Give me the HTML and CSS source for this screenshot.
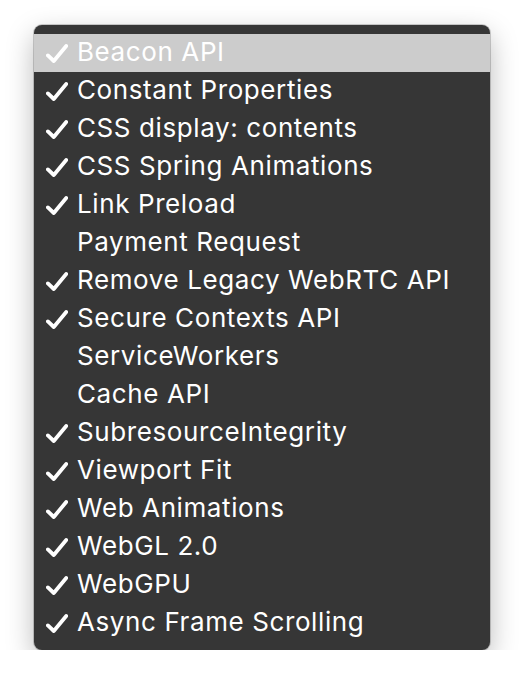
FILE: index.html
```html
<!DOCTYPE html>
<html>
<head>
<meta charset="utf-8">
<link rel="stylesheet" href="styles.css">
</head>
<body>
<div class="menu">
  <div class="item active"><svg class="check" viewBox="0 0 22 19"><path d="M1.9 11.4 L7.8 17 L20.2 2"/></svg><span class="label">Beacon API</span></div>
  <div class="item"><svg class="check" viewBox="0 0 22 19"><path d="M1.9 11.4 L7.8 17 L20.2 2"/></svg><span class="label">Constant Properties</span></div>
  <div class="item"><svg class="check" viewBox="0 0 22 19"><path d="M1.9 11.4 L7.8 17 L20.2 2"/></svg><span class="label">CSS display: contents</span></div>
  <div class="item"><svg class="check" viewBox="0 0 22 19"><path d="M1.9 11.4 L7.8 17 L20.2 2"/></svg><span class="label">CSS Spring Animations</span></div>
  <div class="item"><svg class="check" viewBox="0 0 22 19"><path d="M1.9 11.4 L7.8 17 L20.2 2"/></svg><span class="label">Link Preload</span></div>
  <div class="item"><span class="nocheck"></span><span class="label">Payment Request</span></div>
  <div class="item"><svg class="check" viewBox="0 0 22 19"><path d="M1.9 11.4 L7.8 17 L20.2 2"/></svg><span class="label">Remove Legacy WebRTC API</span></div>
  <div class="item"><svg class="check" viewBox="0 0 22 19"><path d="M1.9 11.4 L7.8 17 L20.2 2"/></svg><span class="label">Secure Contexts API</span></div>
  <div class="item"><span class="nocheck"></span><span class="label">ServiceWorkers</span></div>
  <div class="item"><span class="nocheck"></span><span class="label">Cache API</span></div>
  <div class="item"><svg class="check" viewBox="0 0 22 19"><path d="M1.9 11.4 L7.8 17 L20.2 2"/></svg><span class="label">SubresourceIntegrity</span></div>
  <div class="item"><svg class="check" viewBox="0 0 22 19"><path d="M1.9 11.4 L7.8 17 L20.2 2"/></svg><span class="label">Viewport Fit</span></div>
  <div class="item"><svg class="check" viewBox="0 0 22 19"><path d="M1.9 11.4 L7.8 17 L20.2 2"/></svg><span class="label">Web Animations</span></div>
  <div class="item"><svg class="check" viewBox="0 0 22 19"><path d="M1.9 11.4 L7.8 17 L20.2 2"/></svg><span class="label">WebGL 2.0</span></div>
  <div class="item"><svg class="check" viewBox="0 0 22 19"><path d="M1.9 11.4 L7.8 17 L20.2 2"/></svg><span class="label">WebGPU</span></div>
  <div class="item"><svg class="check" viewBox="0 0 22 19"><path d="M1.9 11.4 L7.8 17 L20.2 2"/></svg><span class="label">Async Frame Scrolling</span></div>
</div>
</body>
</html>
```

FILE: styles.css
```css
html, body {
  margin: 0;
  padding: 0;
  background: #ffffff;
}
body {
  padding: 25px 0 0 34px;
}
.menu {
  width: 456px;
  box-sizing: border-box;
  padding: 9px 0 8px;
  background: #363636;
  border-radius: 8px;
  box-shadow: 0 0 0 1px rgba(0, 0, 0, 0.18), 0 10px 28px rgba(0, 0, 0, 0.28);
  font-family: Inter, "Noto Sans", sans-serif;
  font-size: 26px;
  color: #ffffff;
}
.item {
  display: flex;
  align-items: center;
  box-sizing: border-box;
  height: 38px;
  padding: 0 0 3px 12px;
  line-height: 35px;
}
.item.active {
  background: #cccccc;
}
.check {
  width: 22px;
  height: 19px;
  flex: none;
  margin: 3px 9px 0 0;
  fill: none;
  stroke: #ffffff;
  stroke-width: 3.8;
  stroke-linecap: round;
  stroke-linejoin: round;
}
.nocheck {
  width: 22px;
  flex: none;
  margin-right: 9px;
}
.label {
  white-space: nowrap;
  letter-spacing: 0.6px;
}
```
